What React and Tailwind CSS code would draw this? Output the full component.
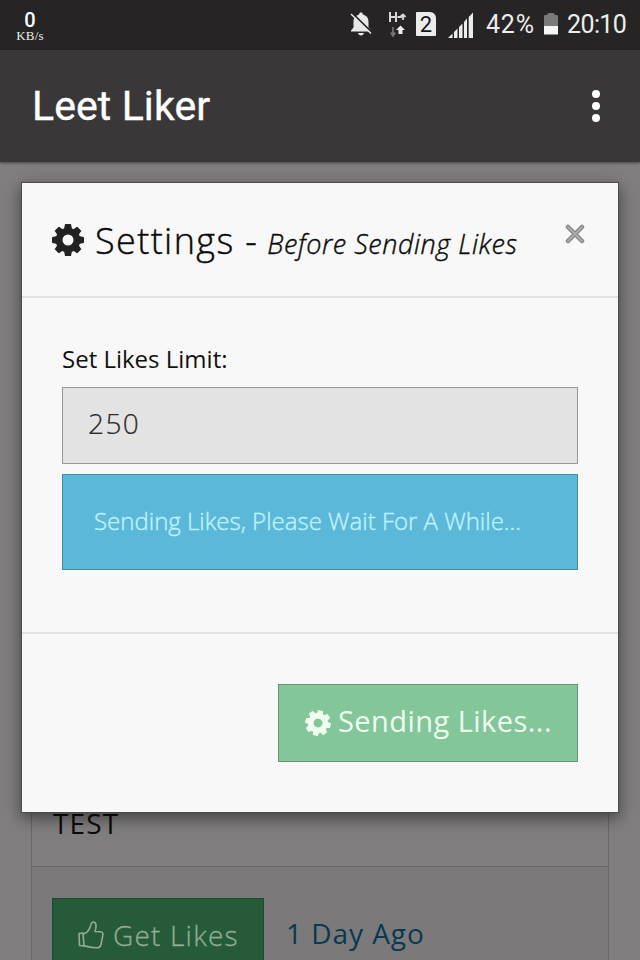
const TEETH = [0, 45, 90, 135, 180, 225, 270, 315];

function CogIcon({ className }) {
    return (
        <svg viewBox="-16 -16 32 32" fill="currentColor" className={className}>
            <circle r="8.9" fill="none" stroke="currentColor" strokeWidth="6.8" />
            {TEETH.map((angle) => (
                <path
                    key={angle}
                    d="M-4 -11 L-3.1 -15.4 Q-3 -16 -2.4 -16 H2.4 Q3 -16 3.1 -15.4 L4 -11 Z"
                    transform={`rotate(${angle})`}
                />
            ))}
        </svg>
    );
}

function ThumbIcon({ className }) {
    return (
        <svg
            viewBox="0 0 26 28"
            fill="none"
            stroke="currentColor"
            strokeWidth="1.6"
            strokeLinejoin="round"
            strokeLinecap="round"
            className={className}
        >
            <path d="M1 12.5 L5 12 L6 25 L1.5 24.5 Z" />
            <path d="M5.5 13 C8.5 12 11.5 8.500 12.500 5 C13 2 14 1 15.500 1 C18.500 1.500 18.700 5 17 10.500 L22.500 10.800 C24.500 11 25.200 12.500 24.800 14.500 L23 23.500 C22.500 26 21 26.800 19 26.800 C14 27 10 25.800 6 24.800" />
        </svg>
    );
}

function StatusBar() {
    return (
        <div className="flex h-[50px] shrink-0 items-start bg-[#262425] text-[#ededed]">
            <div className="ml-[15px] mt-[12px] flex w-[30px] flex-col items-center">
                <span className="block h-[17px] font-[Roboto] text-[20px] font-medium leading-[17px] text-white">
                    0
                </span>
                <span className="mt-[2px] block h-[10px] whitespace-nowrap font-['Liberation_Serif'] text-[13px] leading-[10px] tracking-[0.2px]">
                    KB/s
                </span>
            </div>

            <svg viewBox="0 0 22 25" className="ml-[305px] mt-[12px] h-[25px] w-[22px]">
                <g fill="#e8e8e8">
                    <path d="M1 19.500 V18.500 L3.500 15.500 V10 C3.500 5.500 6 3.300 9.300 2.500 V1.500 C9.300 .2 12.700 .2 12.700 1.500 V2.500 C16 3.300 18.500 5.500 18.500 10 V15.500 L21 18.500 V19.500 Z" />
                    <path d="M8 21 H14 C13.500 24.200 8.500 24.200 8 21 Z" />
                </g>
                <path d="M2.500 1.500 L22 20.500" stroke="#262425" strokeWidth="1.800" />
                <path d="M1 2 L21 21.500" stroke="#e8e8e8" strokeWidth="1.500" />
            </svg>

            <svg viewBox="0 0 18 26" className="ml-[17px] mt-[12px] h-[26px] w-[18px]">
                <g fill="none" stroke="#d8d8d8" strokeWidth="2">
                    <path d="M1 0 V10 M7 0 V10 M1 5 H7" />
                    <path d="M8.500 5 H13 M11 5 L14 2.500 L16.500 5 M14 2.500 V8" strokeWidth="1.800" />
                </g>
                <path d="M4 15 V22 M1.800 20.500 L4 24 L6.200 20.500" fill="none" stroke="#77777a" strokeWidth="1.700" />
                <path d="M11.500 13.500 L16 18 H13.500 V22 H9.500 V18 H7 Z" fill="#efefef" />
            </svg>

            <div className="ml-[9px] mt-[12px] flex h-[24px] w-[20px] items-center justify-center rounded-[1px] rounded-tr-[6px] bg-[#ececec] pt-[1px] font-[Roboto] text-[22px] leading-none text-[#171717]">
                2
            </div>

            <svg viewBox="0 0 25 26" fill="#ececec" className="ml-[12px] mt-[12px] h-[26px] w-[25px]">
                <path d="M0 26 L4.500 21.500 V26 Z M6 26 V20 L9.500 16.500 V26 Z M11 26 V15 L14.500 11.500 V26 Z M16 26 V10 L19 6.500 V26 Z M20.700 26 V5 L25 .5 V26 Z" />
            </svg>

            <span className="ml-[13px] mt-[10px] w-[51px] whitespace-nowrap font-[Roboto] text-[25px] leading-[30px] tracking-[0.8px]">
                42%
            </span>

            <svg viewBox="0 0 14 22" className="ml-[7px] mt-[13px] h-[22px] w-[14px]">
                <path d="M0 13 V3 Q0 2 1 2 H3 Q3.500 0 5 0 H9 Q10.500 0 11 2 H13 Q14 2 14 3 V13 Z" fill="#7b7a7b" />
                <path d="M0 13 H14 V21.500 H0 Z" fill="#f6f6f6" />
            </svg>

            <span className="ml-[9px] mt-[10px] whitespace-nowrap font-[Roboto] text-[25px] leading-[30px] tracking-[-0.6px]">
                20:10
            </span>
        </div>
    );
}

function AppHeader() {
    return (
        <header className="z-10 flex h-[112px] shrink-0 items-center justify-between bg-[#393738] pl-[32px] pr-[40px] shadow-[0_1px_3px_rgba(0,0,0,0.45)]">
            <h1 className="whitespace-nowrap font-[Roboto] text-[41px] leading-[50px] tracking-[0.1px] text-white [-webkit-text-stroke:0.4px]">
                Leet Liker
            </h1>
            <div className="flex flex-col gap-[4px]">
                <span className="size-[8px] rounded-full bg-white" />
                <span className="size-[8px] rounded-full bg-white" />
                <span className="size-[8px] rounded-full bg-white" />
            </div>
        </header>
    );
}

function PostList() {
    return (
        <main className="flex-1 bg-[#807e7f] px-[31px] pt-[40px]">
            <div className="h-[760px] border border-[#6a6869]">
                <div className="flex h-[664px] items-end border-b border-[#6a6869] pb-[25px] pl-[21px]">
                    <p className="text-[28px] leading-[36px] tracking-[1.1px] text-[#0c0c0c]">TEST</p>
                </div>
                <div className="flex h-[96px] items-start bg-[#7b797a] pl-[20px] pt-[31px]">
                    <button className="flex h-[76px] w-[212px] items-center border border-[#1d4a2e] bg-[#265b3a] pb-[3px] pl-[25px] text-[#93ac93]">
                        <ThumbIcon className="mr-[9px] h-[28px] w-[26px]" />
                        <span className="whitespace-nowrap text-[28px] font-light tracking-[1.2px] [-webkit-text-stroke:0.3px]">
                            Get Likes
                        </span>
                    </button>
                    <a className="ml-[22px] mt-[16px] whitespace-nowrap text-[28px] leading-[38px] tracking-[0.95px] text-[#073a50]">
                        1 Day Ago
                    </a>
                </div>
            </div>
        </main>
    );
}

function SettingsModal() {
    return (
        <div className="absolute left-[21px] top-[182px] z-20 flex h-[631px] w-[598px] flex-col border border-[#4c4a4b] bg-[#f8f8f8] shadow-[0_5px_15px_rgba(0,0,0,0.5)]">
            <div className="flex h-[115px] shrink-0 items-start border-b-2 border-[#e2e2e2] pl-[30px]">
                <CogIcon className="mt-[41px] size-[32px] text-[#222222]" />
                <h2 className="ml-[11px] mt-[33px] flex items-baseline whitespace-nowrap leading-[50px] text-[#0a0a0a]">
                    <span className="text-[36px] font-light tracking-[1.4px] [-webkit-text-stroke:0.4px]">
                        Settings -
                    </span>
                    <em className="ml-[9px] text-[27px] font-light tracking-[0.55px] [-webkit-text-stroke:0.4px]">
                        Before Sending Likes
                    </em>
                </h2>
                <button className="ml-auto mr-[33px] mt-[41px]">
                    <svg viewBox="0 0 20 20" className="size-[20px]" fill="none" strokeLinecap="round">
                        <path d="M3 3 L17 17 M17 3 L3 17" stroke="#858585" strokeWidth="4.500" />
                        <path d="M3 3 L17 17 M17 3 L3 17" stroke="#aaaaaa" strokeWidth="2" />
                    </svg>
                </button>
            </div>

            <div className="flex h-[336px] shrink-0 flex-col border-b-2 border-[#e2e2e2] px-[40px] pt-[43px]">
                <label className="h-[46px] whitespace-nowrap text-[24px] leading-[36px] text-[#111111]">
                    Set Likes Limit:
                </label>
                <div className="flex h-[77px] items-center border border-[#999798] bg-[#e4e3e3] pb-[5px] pl-[25px] text-[28px] font-light tracking-[1.4px] text-[#2a2a2a] [-webkit-text-stroke:0.2px]">
                    250
                </div>
                <div className="mt-[10px] flex h-[96px] items-center whitespace-nowrap border border-[#478ba3] bg-[#5bb8d9] pb-[3px] pl-[31px] text-[24px] font-light tracking-[0px] text-[#bdf3fb] [-webkit-text-stroke:0.4px]">
                    Sending Likes, Please Wait For A While...
                </div>
            </div>

            <div className="flex justify-end pr-[40px] pt-[50px]">
                <button className="flex h-[78px] w-[300px] items-center border border-[#6a937a] bg-[#82c699] pl-[26px] text-[#effff0]">
                    <CogIcon className="mr-[7px] size-[26px] rotate-12" />
                    <span className="whitespace-nowrap pb-[4px] text-[29px] tracking-[0.45px]">
                        Sending Likes...
                    </span>
                </button>
            </div>
        </div>
    );
}

export default function App() {
    return (
        <div className="relative flex h-[960px] w-[640px] flex-col overflow-hidden bg-[#807e7f] font-['Open_Sans',sans-serif]">
            <StatusBar />
            <AppHeader />
            <PostList />
            <SettingsModal />
        </div>
    );
}
